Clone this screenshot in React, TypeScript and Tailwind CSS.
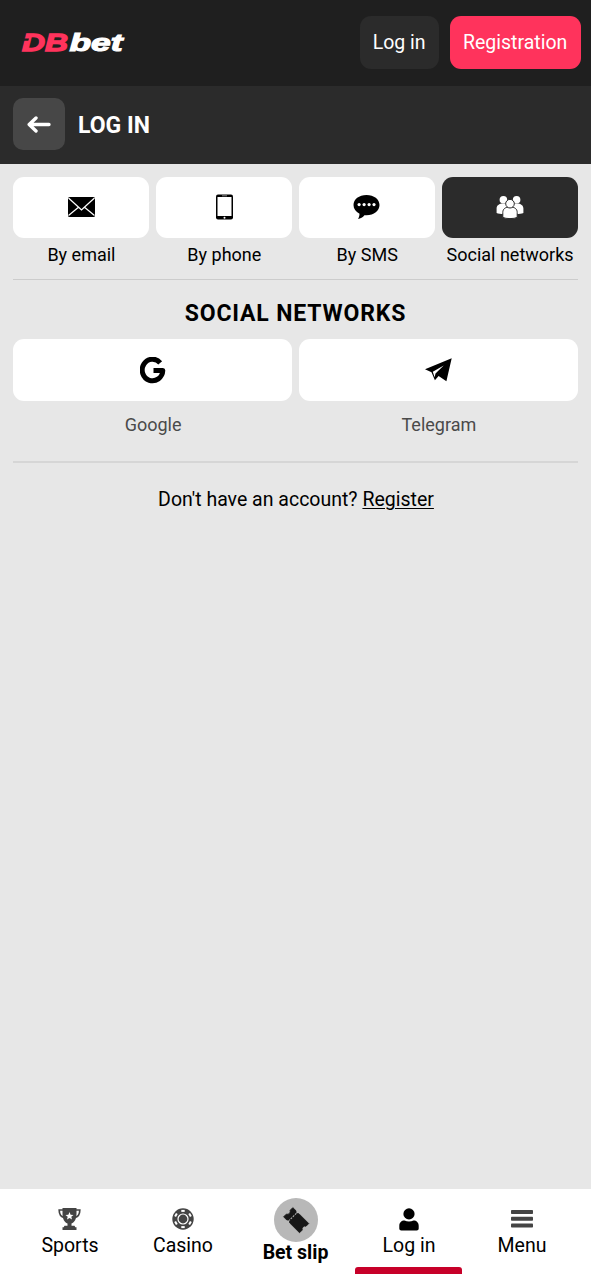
import type { ReactNode } from "react";
import clsx from "clsx";

export default function App() {
  return (
    <div className="flex h-[1280px] w-[591px] flex-col overflow-hidden bg-[#e7e7e7] font-['Roboto',sans-serif] text-black">
      <header className="flex h-[85.5px] shrink-0 items-center justify-between bg-[#1f1f1f] pr-[10.4px] pl-[17px]">
        <Logo />
        <div className="flex gap-[11px] text-[19.5px] text-white">
          <button className="h-[53px] w-[79px] rounded-[11px] bg-[#2b2b2b] pb-px">Log in</button>
          <button className="h-[53px] w-[131px] rounded-[11px] bg-[#ff335c] pb-px">Registration</button>
        </div>
      </header>

      <div className="flex h-[78px] shrink-0 items-center gap-[13px] bg-[#2b2b2b] pb-[0.5px] pl-[13px]">
        <button className="flex size-[52px] items-center justify-center rounded-[10px] bg-[#474747]" aria-label="Back">
          <svg width="24" height="18" viewBox="0 0 24 18" fill="none" stroke="#fff" strokeWidth="3.4" strokeLinecap="round" strokeLinejoin="round">
            <path d="M22 9.500H3M9 3 2.200 9.500 9 16" />
          </svg>
        </button>
        <h1 className="pt-[4px] text-[23px] font-bold text-white">LOG IN</h1>
      </div>

      <main className="flex flex-1 flex-col px-[13px] pt-[13px]">
        <div className="grid grid-cols-4 gap-[6.5px]">
          <Method label="By email"><MailIcon /></Method>
          <Method label="By phone"><PhoneIcon /></Method>
          <Method label="By SMS"><SmsIcon /></Method>
          <Method label="Social networks" active><GroupIcon /></Method>
        </div>
        <div className="mt-[12px] h-px bg-[#cccccc]" />

        <h2 className="mt-[18.5px] text-center text-[23px] leading-[30px] font-bold tracking-[0.85px]">SOCIAL NETWORKS</h2>
        <div className="mt-[10.5px] grid grid-cols-2 gap-[6.5px]">
          <Network label="Google"><GoogleIcon /></Network>
          <Network label="Telegram"><TelegramIcon /></Network>
        </div>
        <div className="mt-[24px] h-[2px] bg-[#d6d6d6]" />

        <p className="mt-[23px] pl-px text-center text-[19.5px] leading-[28px]">
          Don't have an account? <a className="underline decoration-1 underline-offset-2">Register</a>
        </p>
      </main>

      <nav className="grid h-[91px] shrink-0 grid-cols-5 bg-white px-[13px]">
        <NavItem label="Sports"><TrophyIcon /></NavItem>
        <NavItem label="Casino"><ChipIcon /></NavItem>
        <div className="flex flex-col items-center pt-[9px]">
          <div className="flex size-[44px] items-center justify-center rounded-full bg-[#b8b8b8]">
            <TicketIcon />
          </div>
          <span className="text-[19.5px] leading-[22px] font-bold">Bet slip</span>
        </div>
        <NavItem label="Log in" active><UserIcon /></NavItem>
        <NavItem label="Menu"><MenuIcon /></NavItem>
      </nav>
    </div>
  );
}

function Method({ label, active, children }: { label: string; active?: boolean; children: ReactNode }) {
  return (
    <div className="flex flex-col items-center">
      <button
        className={clsx(
          "flex h-[61.5px] w-full items-center justify-center rounded-[11px]",
          active ? "bg-[#2b2b2b] text-white" : "bg-white text-black",
        )}
      >
        {children}
      </button>
      <span className="mt-[5px] pl-[0.5px] text-[18px] leading-[24px] whitespace-nowrap">{label}</span>
    </div>
  );
}

function Network({ label, children }: { label: string; children: ReactNode }) {
  return (
    <div className="flex flex-col items-center">
      <button className="flex h-[62px] w-full items-center justify-center rounded-[11px] bg-white">{children}</button>
      <span className="mt-[12px] pl-px text-[18px] leading-[24px] text-[#4a4a4a]">{label}</span>
    </div>
  );
}

function NavItem({ label, active, children }: { label: string; active?: boolean; children: ReactNode }) {
  return (
    <div className={clsx("flex flex-col items-center pt-[18px]", active ? "text-black" : "text-[#444]")}>
      <div className="flex h-[24px] items-center justify-center">{children}</div>
      <span className="mt-[3px] pl-px text-[19.5px] leading-[24px] text-black">{label}</span>
      {active && <div className="mt-[9px] h-[6.5px] w-[107px] rounded-t-[3px] bg-[#c70029]" />}
    </div>
  );
}

function Logo() {
  return (
    <svg width="118" height="36" viewBox="0 0 118 36" className="font-['Liberation_Sans',sans-serif] text-[24px] font-bold italic">
      <text x="5" y="26" fill="#ff335c" stroke="#ff335c" strokeWidth="1.3" textLength="46" lengthAdjust="spacingAndGlyphs">DB</text>
      <text x="52.500" y="26" fill="#fff" stroke="#fff" strokeWidth="1.1" textLength="53" lengthAdjust="spacingAndGlyphs">bet</text>
      <path d="M4 13.400h8l-.7 2.400H4Z" fill="#1f1f1f" />
    </svg>
  );
}

function MailIcon() {
  return (
    <svg width="27" height="20" viewBox="0 0 27 20">
      <rect width="27" height="20" rx="1.5" fill="currentColor" />
      <path d="m.5 1 10.7 9.800L13.500 13l2.300-2.200L26.500 1M.5 18.500l10-8.300m16 8.300-10-8.300" fill="none" stroke="#fff" strokeWidth="1.2" />
    </svg>
  );
}

function PhoneIcon() {
  return (
    <svg width="17" height="26" viewBox="0 0 17 26">
      <rect width="17" height="25" y=".5" rx="2" fill="currentColor" />
      <path d="M1.500 3h14v19h-14z" fill="#fff" />
      <path d="M6 1.800h5" stroke="#bbb" strokeWidth=".7" />
      <circle cx="8.500" cy="23.800" r="1" fill="#fff" />
    </svg>
  );
}

function SmsIcon() {
  return (
    <svg width="27" height="26" viewBox="0 0 27 26">
      <path d="M13.500 1C6 1 .5 5.300.5 11c0 3.800 2.300 6.800 6 8.700 0 2-.5 3.900-1.600 5.300 2.700-.4 4.900-1.800 6.500-3.800l2.100.1c7.500 0 13-4.600 13-10.300S21 1 13.500 1Z" fill="currentColor" />
      <g fill="#fff">
        <circle cx="6.100" cy="10.600" r="1.6" />
        <circle cx="11.100" cy="10.600" r="1.6" />
        <circle cx="16.100" cy="10.600" r="1.6" />
        <circle cx="21" cy="10.600" r="1.6" />
      </g>
    </svg>
  );
}

function GroupIcon() {
  return (
    <svg width="28" height="24" viewBox="0 0 28 24" fill="currentColor">
      <circle cx="7.400" cy="4.700" r="3.8" />
      <circle cx="20.600" cy="4.700" r="3.8" />
      <path d="M.6 18v-4.400C.6 10.500 3 8.500 7.400 8.500s6.500 2 6.500 5.100V18c-3 1.400-10 1.400-13.300 0Zm13.500 0v-4.400c0-3.100 2.200-5.100 6.500-5.100s6.800 2 6.800 5.100V18c-3.300 1.400-10.300 1.400-13.300 0Z" />
      <g stroke="#2b2b2b" strokeWidth="1">
        <path d="M6.800 22.400v-5c0-3.300 2.400-5.500 7.200-5.500s7.200 2.200 7.200 5.500v5c-3.100 1.600-11.300 1.600-14.400 0Z" />
        <circle cx="14" cy="8.700" r="4.3" />
      </g>
    </svg>
  );
}

function GoogleIcon() {
  return (
    <svg width="26" height="27" viewBox="0 0 26 27" fill="none" stroke="#000" strokeWidth="5">
      <path d="M20.200 5.800A10.300 10.800 0 1 0 22.800 13.500H13.500" strokeLinejoin="round" />
    </svg>
  );
}

function TelegramIcon() {
  return (
    <svg width="27" height="24" viewBox="0 0 27 24">
      <path d="M26.700.3 0 11.200l6.500 3.100 3.400 8 3.700-4.300 7.800 5.300Z" fill="#000" />
      <path d="m18.700 7.600-10.900 6.200 1.800 5.500.9-3.900Z" fill="#fff" />
    </svg>
  );
}

function TrophyIcon() {
  return (
    <svg width="23" height="24" viewBox="0 0 23 24">
      <path d="M4.500 1h14v5.500c0 5.500-2 9-5 10v2.200h3l.8 1.600h1.200V23h-14v-2.700h1.200l.8-1.600h3v-2.200c-3-1-5-4.500-5-10Z" fill="currentColor" />
      <path d="M5.500 3H1.200c0 4.700 1.800 7 5.300 7.600M17.500 3h4.300c0 4.700-1.800 7-5.300 7.600" fill="none" stroke="currentColor" strokeWidth="1.7" />
      <path d="m11.500 5 1.100 2.700 2.900.2-2.200 1.900.7 2.800-2.500-1.500L9 12.600l.7-2.800-2.200-1.900 2.900-.2Z" fill="#fff" />
    </svg>
  );
}

function ChipIcon() {
  return (
    <svg width="22" height="22" viewBox="0 0 22 22" fill="none" stroke="#fff">
      <circle cx="11" cy="11" r="10.700" fill="currentColor" stroke="none" />
      <circle cx="11" cy="11" r="5" strokeWidth="1.200" />
      {[0, 60, 120, 180, 240, 300].map((deg) => (
        <path key={deg} d="M9.300 2.900h3.400" strokeWidth="2" transform={`rotate(${deg} 11 11)`} />
      ))}
    </svg>
  );
}

function TicketIcon() {
  return (
    <svg width="28" height="28" viewBox="0 0 28 28">
      <g transform="rotate(45 14 14)">
        <path d="M3 7.500h4.500l2 2 2-2h14v3.800a3 3 0 0 0 0 5.400v3.800h-14l-2-2-2 2H3v-3.800a3 3 0 0 0 0-5.400Z" fill="#171717" stroke="#171717" strokeWidth=".8" strokeLinejoin="round" />
        <path d="M9.500 9v10" stroke="#b8b8b8" strokeWidth="1" strokeDasharray="2 1" />
      </g>
    </svg>
  );
}

function UserIcon() {
  return (
    <svg width="20" height="23" viewBox="0 0 20 23" fill="currentColor">
      <circle cx="10" cy="5.900" r="5.600" />
      <path d="M.3 20.500v-2.700c0-3.300 2.200-5.300 5.200-5.300 2.800 1.300 6.200 1.300 9 0 3 0 5.200 2 5.200 5.300v2.700c0 1.300-.8 2-2 2H2.300c-1.200 0-2-.7-2-2Z" />
    </svg>
  );
}

function MenuIcon() {
  return (
    <svg width="22" height="18" viewBox="0 0 22 18" fill="currentColor">
      <rect width="22" height="4" rx=".8" />
      <rect y="6.800" width="22" height="4" rx=".8" />
      <rect y="13.500" width="22" height="4" rx=".8" />
    </svg>
  );
}
